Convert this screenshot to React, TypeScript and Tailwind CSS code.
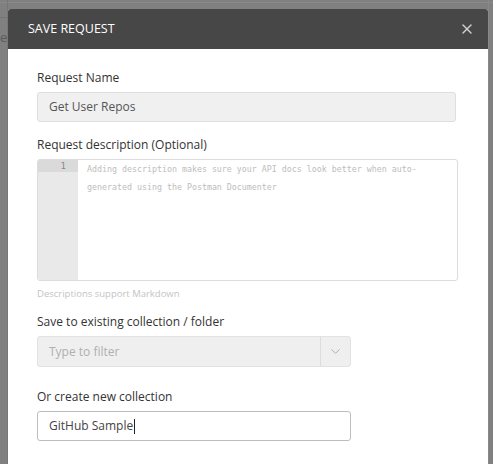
import { X, ChevronDown } from "lucide-react";

export default function App() {
  return (
    <div className="relative h-[464px] w-[493px] overflow-hidden bg-[#808080] font-['Open_Sans',sans-serif]">
      {/* dimmed app behind the modal */}
      <div className="absolute left-0 top-[2px] h-px w-full bg-[#8a8a8a]" />
      <div className="absolute left-0 top-[17px] h-px w-[8px] bg-[#747474]" />
      <div className="absolute left-[7px] top-0 h-full w-px bg-[#767676]" />
      <div className="absolute left-0 top-[31px] text-[13px] leading-none text-[#5a5a5a]">e</div>
      <div className="absolute right-[4px] top-0 h-full w-px bg-[#888]" />

      {/* modal */}
      <div className="relative ml-[8px] mt-[9px] w-[480px] overflow-hidden rounded-t-[3px] bg-white">
        <div className="flex h-[40px] items-center justify-between bg-[#474747] pl-[20px] pr-[13px]">
          <span className="text-[12.5px] text-white">SAVE REQUEST</span>
          <X className="h-[16px] w-[16px] text-[#d0d0d0]" strokeWidth={2.2} />
        </div>

        <div className="h-[415px] px-[29px] pt-[20px]">
          <div className="text-[12px] leading-[17px] text-[#333]">Request Name</div>
          <div className="mt-[6px] flex h-[30px] w-[419px] items-center rounded-[3px] border border-[#dedede] bg-[#f0f0f0] px-[11px] text-[12px] text-[#555]">
            Get User Repos
          </div>

          <div className="mt-[14px] text-[12px] leading-[17px] text-[#333]">Request description (Optional)</div>
          <div className="mt-[6px] flex h-[122px] w-[421px] overflow-hidden rounded-[3px] border border-[#dcdcdc] bg-white">
            <div className="w-[40px] shrink-0 bg-[#e9e9e9]">
              <div className="h-[12px] bg-[#dadada] pr-[12px] text-right font-['DejaVu_Sans_Mono',monospace] text-[9px] leading-[12px] text-[#888]">
                1
              </div>
            </div>
            <div className="pl-[9px] pr-[20px] font-['DejaVu_Sans_Mono',monospace] text-[8.3px] leading-[18px] text-[#bdbdbd]">
              Adding description makes sure your API docs look better when auto-
              <br />
              generated using the Postman Documenter
            </div>
          </div>
          <div className="mt-[6px] text-[9.5px] leading-[14px] text-[#c4c4c4]">Descriptions support Markdown</div>

          <div className="mt-[12px] text-[12px] leading-[17px] text-[#333]">Save to existing collection / folder</div>
          <div className="mt-[6px] flex h-[31px] w-[314px] rounded-[3px] border border-[#e2e2e2] bg-[#efefef]">
            <div className="flex flex-1 items-center px-[11px] text-[12px] text-[#b0b0b0]">Type to filter</div>
            <div className="flex w-[30px] items-center justify-center border-l border-[#dcdcdc]">
              <ChevronDown className="h-[15px] w-[15px] text-[#aaa]" strokeWidth={1.5} />
            </div>
          </div>

          <div className="mt-[21px] text-[12px] leading-[17px] text-[#333]">Or create new collection</div>
          <div className="mt-[6px] flex h-[30px] w-[314px] items-center rounded-[3px] border border-[#bdbdbd] bg-white px-[11px] text-[12px] text-[#444]">
            GitHub Sample
            <span className="ml-px inline-block h-[15px] w-px bg-[#222]" />
          </div>
        </div>
      </div>
    </div>
  );
}
